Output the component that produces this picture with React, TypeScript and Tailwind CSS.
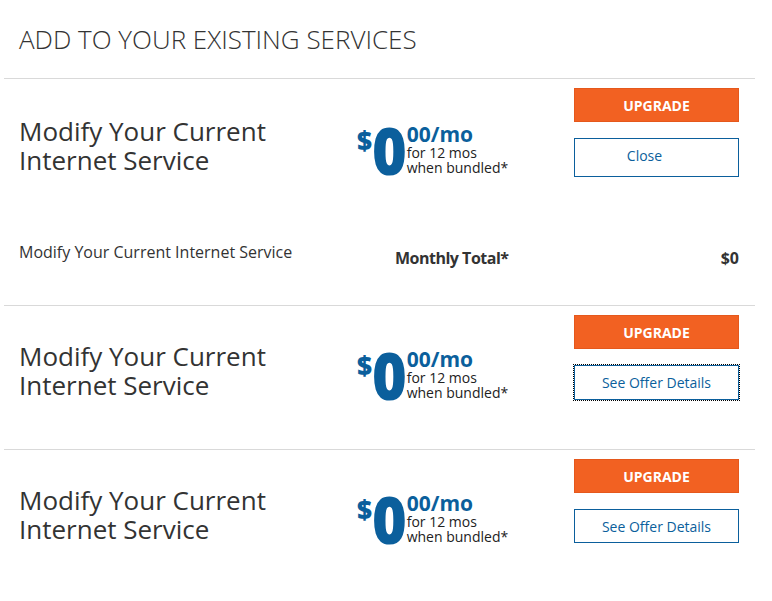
import React from 'react';

const font = { fontFamily: '"Open Sans", "Liberation Sans", sans-serif' };

const Price = () => (
  <div className="flex items-start text-[#0b5f9c]">
    <span className="text-[26px] font-extrabold leading-none mt-[4px]">$</span>
    <span className="text-[66px] font-extrabold leading-[52px] tracking-[-2px] scale-x-90 origin-left -mr-[4px]">0</span>
    <div className="flex flex-col ml-[2px]">
      <span className="text-[21px] font-bold leading-[23px]">00/mo</span>
      <span className="text-[14px] text-[#222] leading-[14px]">for 12 mos</span>
      <span className="text-[14px] text-[#222] leading-[15px]">when bundled*</span>
    </div>
  </div>
);

const OfferRow = ({ secondary, focused, first }: { secondary: string; focused?: boolean; first?: boolean }) => (
  <div className={first ? 'flex items-center h-[143px] pb-[10px]' : 'flex items-center h-[143px] pb-[14px]'}>
    <div className="w-[338px] text-[26px] leading-[29px] text-[#333]">
      Modify Your Current
      <br />
      Internet Service
    </div>
    <div className="flex-1 pt-[6px]">
      <Price />
    </div>
    <div className="w-[165px] self-start pt-[9px] flex flex-col gap-[16px]">
      <button className="h-[34px] bg-[#f26122] border border-[#e5581c] text-white text-[14px] font-bold uppercase">
        Upgrade
      </button>
      <button
        className={
          secondary === 'Close'
            ? 'h-[39px] border border-[#0b5f9c] text-[#0b5f9c] text-[14px] bg-white pr-[24px] pb-[4px]'
            : focused
            ? 'h-[35px] border border-[#0b5f9c] outline outline-1 outline-dotted outline-black text-[#0b5f9c] text-[14px] bg-white'
            : 'h-[34px] border border-[#0b5f9c] text-[#0b5f9c] text-[14px] bg-white'
        }
      >
        {secondary}
      </button>
    </div>
  </div>
);

export default function App() {
  return (
    <div className="bg-white min-h-[601px] w-[772px]" style={font}>
      <div className="mx-[4px] w-[751px]">
        <div className="h-[79px] border-b border-[#d9d9d9] pl-[15px] pt-[22px]">
          <h1 className="text-[26px] font-light text-[#333] leading-[34px] uppercase">Add to your existing services</h1>
        </div>
        <div className="border-b border-[#d9d9d9] pl-[15px] pr-[16px]">
          <OfferRow secondary="Close" first />
          <div className="flex items-start h-[83px] pt-[19px]">
            <div className="w-[376px] text-[16px] text-[#333] leading-[22px]">Modify Your Current Internet Service</div>
            <div className="flex-1 text-[16px] font-bold text-[#333] pt-[5px] tracking-[-0.5px]">Monthly Total*</div>
            <div className="text-[16px] font-bold text-[#333] pt-[5px]">$0</div>
          </div>
        </div>
        <div className="border-b border-[#d9d9d9] pl-[15px] pr-[16px]">
          <OfferRow secondary="See Offer Details" focused />
        </div>
        <div className="pl-[15px] pr-[16px]">
          <OfferRow secondary="See Offer Details" />
        </div>
      </div>
    </div>
  );
}
